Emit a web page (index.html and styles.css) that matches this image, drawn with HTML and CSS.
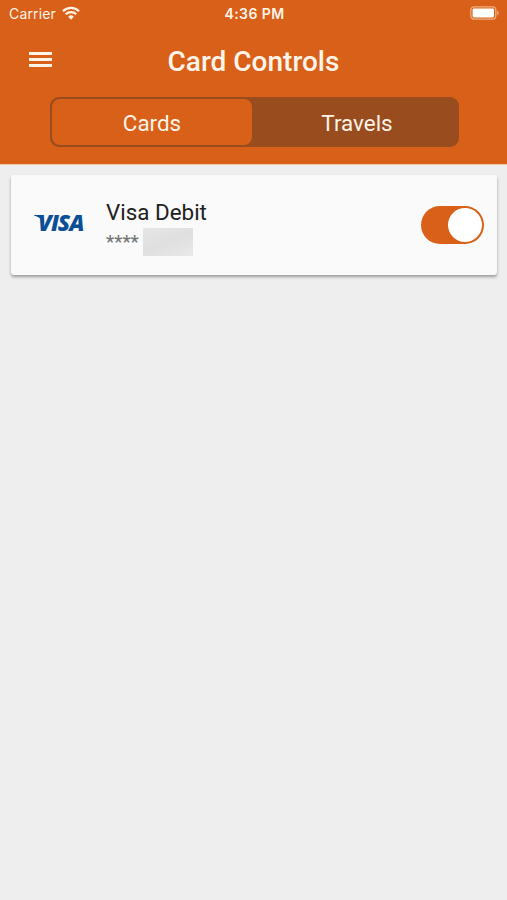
FILE: index.html
```html
<!DOCTYPE html>
<html lang="en">
  <head>
    <meta charset="UTF-8" />
    <meta name="viewport" content="width=device-width, initial-scale=1.0" />
    <title>Card Controls</title>
    <link rel="stylesheet" href="styles.css">
  </head>
  <body>
    <header class="header">
      <div class="status-bar">
        <div class="carrier">
          <span>Carrier</span>
          <svg class="wifi" viewBox="0 0 18 14" aria-hidden="true">
            <path d="M1 5.2a11.4 11.4 0 0 1 16 0" />
            <path d="M3.8 8.2a7.4 7.4 0 0 1 10.4 0" />
            <path class="wifi-dot" d="M6.2 10.7a4 4 0 0 1 5.6 0L9 13.7z" />
          </svg>
        </div>
        <span class="time">4:36 PM</span>
        <svg class="battery" viewBox="0 0 30 14" aria-hidden="true">
          <rect class="battery-case" x="0.8" y="0.8" width="25" height="12.4" rx="3.4" />
          <rect class="battery-level" x="2.6" y="2.6" width="21.4" height="8.8" rx="1.4" />
          <path class="battery-tip" d="M27.2 4.6a2.7 2.7 0 0 1 0 4.8z" />
        </svg>
      </div>

      <div class="title-bar">
        <button class="menu-btn" aria-label="Menu">
          <span></span>
          <span></span>
          <span></span>
        </button>
        <h1 class="title">Card Controls</h1>
      </div>

      <div class="tabs">
        <button class="tab active">Cards</button>
        <button class="tab">Travels</button>
      </div>
    </header>

    <main class="card-list">
      <div class="card">
        <div class="visa-logo">
          <svg class="visa-flick" viewBox="0 0 12 8" aria-hidden="true">
            <path d="M0 0h6.3c1.2 0 2 .5 2.3 1.6L10 8C8.2 4.2 4.8 1.8 0 .6z" />
          </svg>
          <span>VISA</span>
        </div>
        <div class="card-info">
          <div class="card-name">Visa Debit</div>
          <div class="card-number">
            <span class="stars">****</span>
            <span class="masked"></span>
          </div>
        </div>
        <button class="toggle" role="switch" aria-checked="true" aria-label="Visa Debit">
          <span class="knob"></span>
        </button>
      </div>
    </main>
  </body>
</html>
```

FILE: styles.css
```css
:root {
  --primary: #d86018;
  --primary-dark: #994c1e;
  --background: #eeeeee;
  --surface: #fafafa;
  --text: #212121;
  --light: #fff4ea;
  --visa: #0b4f97;
}

* {
  margin: 0;
  padding: 0;
  box-sizing: border-box;
  font-family: Roboto, sans-serif;
}

body {
  min-height: 100vh;
  background: var(--background);
  color: var(--text);
}

button {
  border: none;
  background: none;
  cursor: pointer;
}

.header {
  height: 165px;
  background: var(--primary);
  color: var(--light);
  border-bottom: 1px solid #f3c8a8;
}

.status-bar {
  height: 27px;
  padding: 0 7px 0 9px;
  display: grid;
  grid-template-columns: 1fr auto 1fr;
  align-items: center;
}

.carrier {
  display: flex;
  align-items: center;
  gap: 6px;
}

.carrier span,
.time {
  font-family: Inter, sans-serif;
  font-size: 14px;
  line-height: 27px;
  letter-spacing: 0.15px;
}

.time {
  font-weight: 600;
  letter-spacing: 0.4px;
}

.wifi {
  width: 18px;
  height: 14px;
  margin-top: -2px;
  fill: none;
  stroke: var(--light);
  stroke-width: 2.3;
}

.wifi .wifi-dot {
  fill: var(--light);
  stroke: none;
}

.battery {
  width: 30px;
  height: 14px;
  margin-top: -1px;
  justify-self: end;
}

.battery-case {
  fill: none;
  stroke: #efad83;
  stroke-width: 1.3;
}

.battery-level {
  fill: #fff;
}

.battery-tip {
  fill: #efad83;
}

.title-bar {
  height: 70px;
  padding: 0 29px;
  display: grid;
  grid-template-columns: 1fr auto 1fr;
  align-items: center;
}

.menu-btn {
  width: 23px;
  display: grid;
  gap: 3px;
  margin-bottom: 5px;
}

.menu-btn span {
  height: 3px;
  background: var(--light);
}

.title {
  font-size: 28px;
  font-weight: 500;
  line-height: 36px;
}

.tabs {
  width: 409px;
  height: 50px;
  margin-left: 50px;
  padding: 2px;
  display: grid;
  grid-template-columns: 200px 1fr;
  background: var(--primary-dark);
  border-radius: 9px;
}

.tab {
  padding: 1px 0 0 5px;
  color: var(--light);
  font-size: 22.4px;
  border-radius: 8px;
}

.tab.active {
  padding-left: 0;
  background: var(--primary);
}

.card-list {
  padding: 10px 10px 0 11px;
}

.card {
  height: 100px;
  padding: 0 13px 0 23px;
  display: flex;
  align-items: center;
  background: var(--surface);
  border-radius: 3px;
  box-shadow: 0 2px 3px rgba(0, 0, 0, 0.35);
}

.visa-logo {
  position: relative;
  width: 72px;
  margin-bottom: 5px;
  color: var(--visa);
}

.visa-logo span {
  display: block;
  padding-left: 4px;
  font-family: "Open Sans", sans-serif;
  font-size: 22.5px;
  font-style: italic;
  font-weight: 800;
  line-height: 26px;
  letter-spacing: -1px;
}

.visa-flick {
  position: absolute;
  top: 5px;
  left: 0;
  width: 12px;
  height: 8px;
  fill: var(--visa);
}

.card-info {
  flex: 1;
  padding-top: 4px;
}

.card-name {
  font-size: 22.4px;
  line-height: 28px;
}

.card-number {
  height: 30px;
  padding-top: 2px;
  display: flex;
  align-items: center;
  gap: 4px;
  color: #757575;
}

.stars {
  width: 33px;
  padding-bottom: 1px;
  font-size: 18.5px;
  font-weight: 500;
}

.masked {
  width: 50px;
  height: 28px;
  background: linear-gradient(160deg, #e6e6e6, #dfdfdf 50%, #e9e9e9);
  border-radius: 1px;
}

.toggle {
  width: 63px;
  height: 38px;
  padding: 2px;
  display: flex;
  justify-content: flex-end;
  background: var(--primary);
  border-radius: 19px;
}

.knob {
  width: 34px;
  height: 34px;
  background: #fff;
  border-radius: 50%;
}
```
